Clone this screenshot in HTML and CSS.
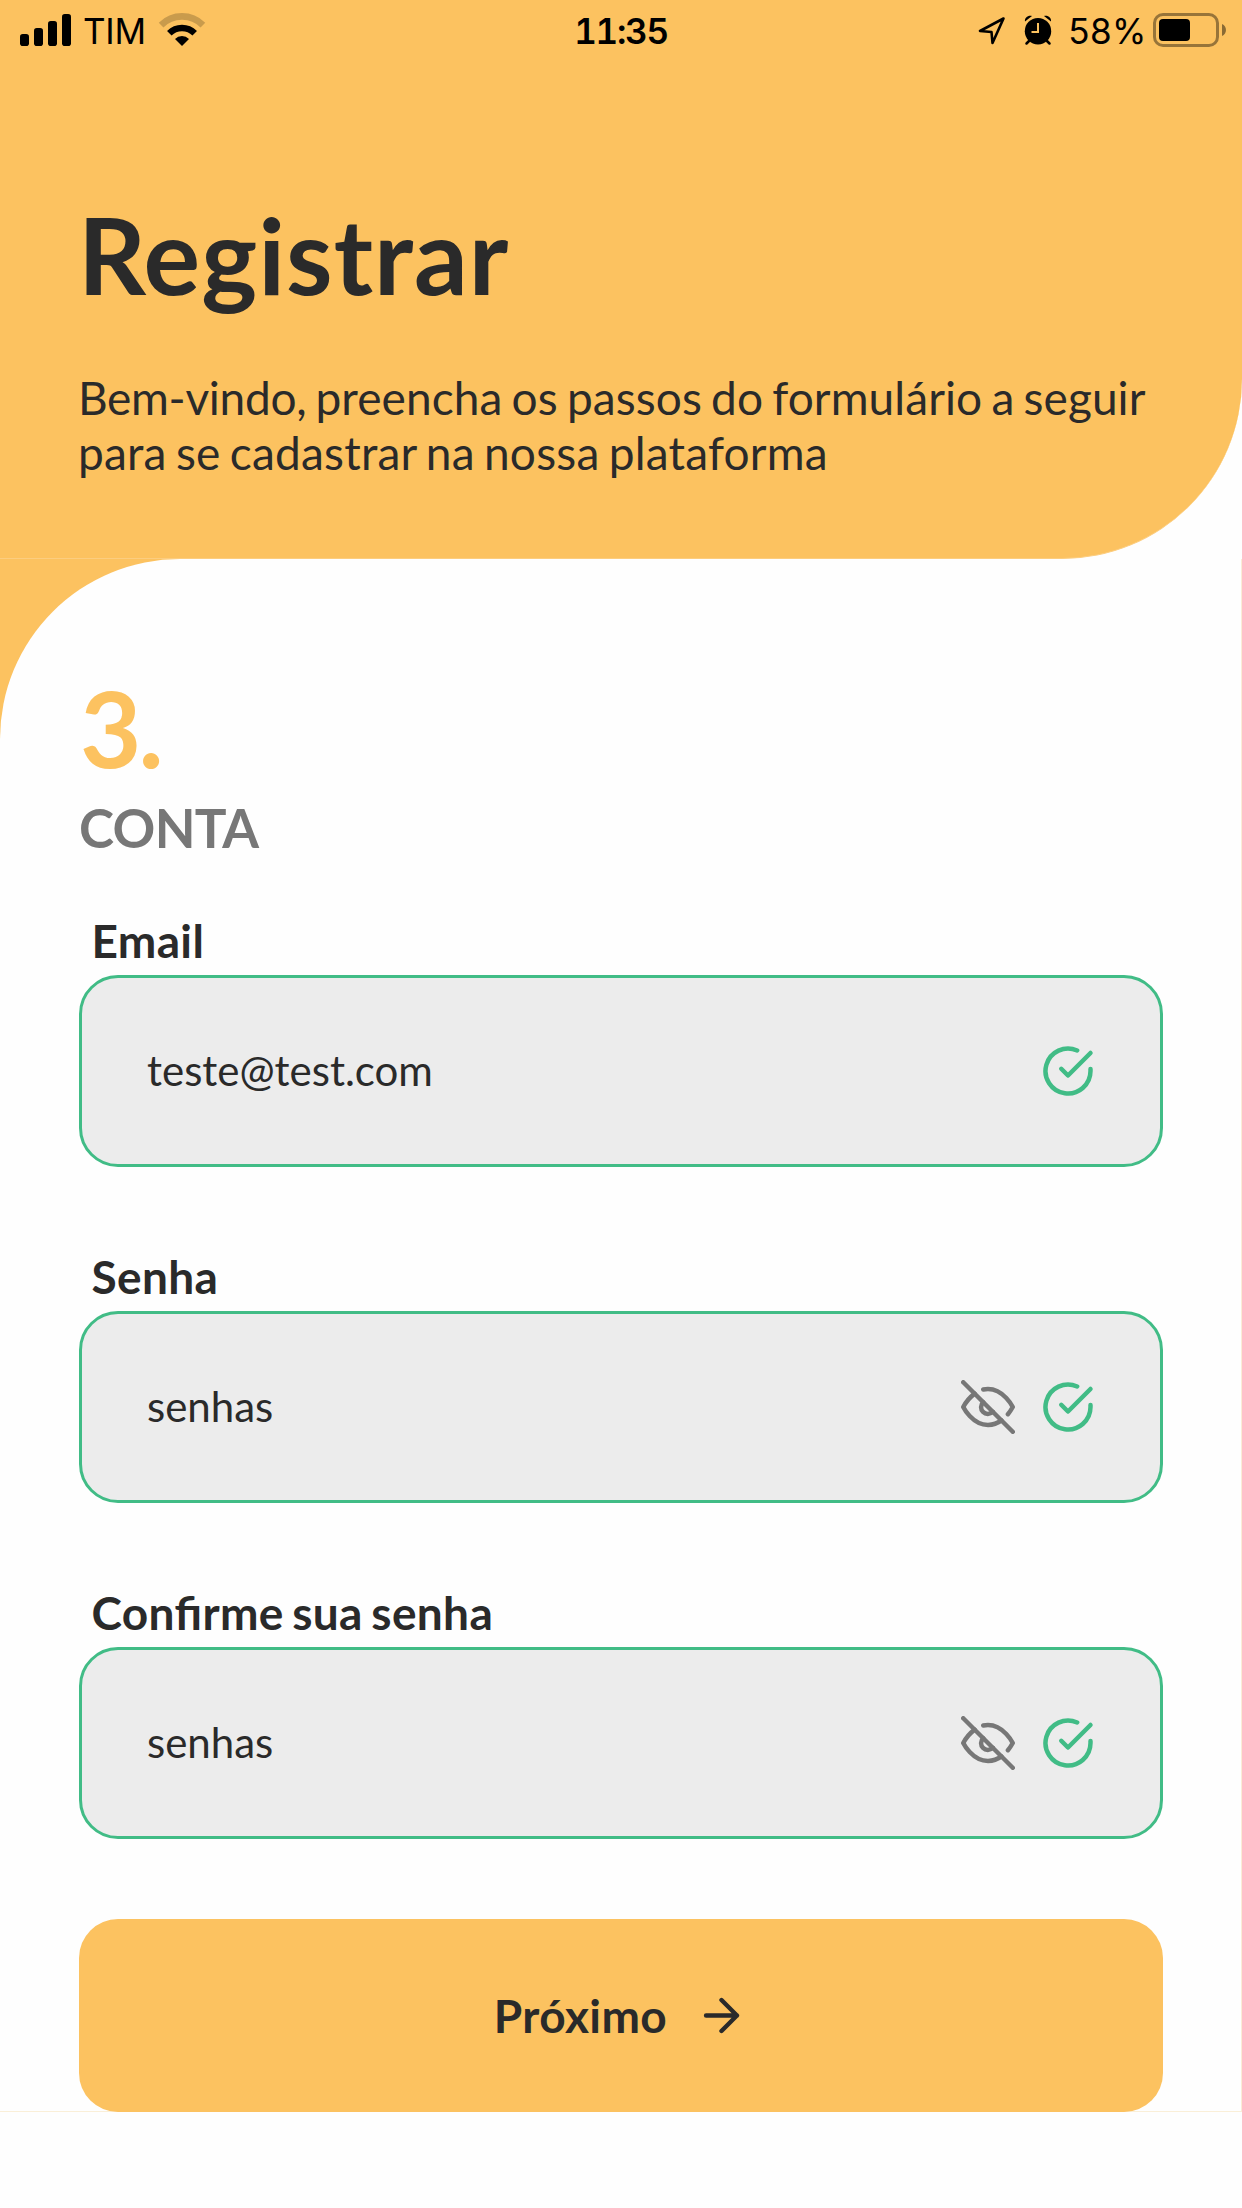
FILE: index.html
```html
<!DOCTYPE html>
<html lang="pt-BR">
<head>
<meta charset="utf-8">
<title>Registrar</title>
<link rel="stylesheet" href="styles.css">
</head>
<body>
<svg class="sprite" aria-hidden="true">
  <symbol id="check-circle" viewBox="0 0 24 24"><path d="M22 11.08V12a10 10 0 1 1-5.93-9.14"/><path d="M22 4 12 14.01l-3-3"/></symbol>
  <symbol id="eye-off" viewBox="0 0 24 24"><path d="M17.94 17.94A10.07 10.07 0 0 1 12 20c-7 0-11-8-11-8a18.45 18.45 0 0 1 5.06-5.94M9.9 4.24A9.12 9.12 0 0 1 12 4c7 0 11 8 11 8a18.5 18.5 0 0 1-2.16 3.19m-6.72-1.07a3 3 0 1 1-4.24-4.24"/><path d="M1 1l22 22"/></symbol>
</svg>
<header class="header">
  <div class="status">
    <div class="status-left">
      <svg width="52" height="33" viewBox="0 0 52 33"><rect y="20" width="9" height="12" rx="2.8"/><rect x="14" y="14" width="9" height="18" rx="2.8"/><rect x="28" y="7" width="9" height="25" rx="2.8"/><rect x="42" width="9" height="32" rx="2.8"/></svg>
      <span class="carrier">TIM</span>
      <svg class="wifi" width="48" height="36" viewBox="0 0 48 36"><path d="M3.1 13.1a29.5 29.5 0 0 1 41.8 0" fill="none" stroke="#000" stroke-opacity=".2" stroke-width="6.6"/><path d="M11.3 21.3a18 18 0 0 1 25.4 0" fill="none" stroke="#000" stroke-width="6.4"/><path d="M24 34 17 27a9.9 9.9 0 0 1 14 0z"/></svg>
    </div>
    <span class="time">11:35</span>
    <div class="status-right">
      <svg width="28" height="30" viewBox="0 0 28 30"><path d="M25.500 3.500 2 16l11.500 1L14.500 28z" fill="none" stroke="#000" stroke-width="2.600" stroke-linejoin="round"/></svg>
      <svg class="alarm" width="28" height="30" viewBox="0 0 28 30"><circle cx="14" cy="16.200" r="13.200"/><path d="M1 6.600C.4 3 4 0 8 1.100zM27 6.600C27.600 3 24 0 20 1.100z"/><path d="M5 26 2.500 28.500M23 26 25.500 28.500" fill="none" stroke="#000" stroke-width="2.500" stroke-linecap="round"/><path d="M14 8v9H7.500" fill="none" stroke="#fcc260" stroke-width="2"/></svg>
      <span class="percent">58%</span>
      <svg class="battery" width="74" height="34" viewBox="0 0 74 34"><rect x="1.500" y="1.500" width="63" height="31" rx="8.500" fill="none" stroke="#000" stroke-opacity=".4" stroke-width="3"/><rect x="6" y="6" width="31" height="22" rx="4"/><path d="M69 11c5.300 2 5.300 10 0 12z" fill-opacity=".45"/></svg>
    </div>
  </div>
  <h1 class="title">Registrar</h1>
  <p class="intro"><span class="greeting">Bem-vindo,</span> preencha os passos do formulário a seguir <span class="purpose">para se cadastrar na nossa plataforma</span></p>
</header>
<main class="backdrop">
  <form class="form">
    <div class="step">3.</div>
    <h2 class="step-name">CONTA</h2>
    <div class="fields">
      <div class="field">
        <label class="label">Email</label>
        <div class="input"><span class="value">teste@test.com</span><svg class="icon valid"><use href="#check-circle"/></svg></div>
      </div>
      <div class="field">
        <label class="label">Senha</label>
        <div class="input"><span class="value">senhas</span><svg class="icon"><use href="#eye-off"/></svg><svg class="icon valid"><use href="#check-circle"/></svg></div>
      </div>
      <div class="field">
        <label class="label">Confirme sua senha</label>
        <div class="input"><span class="value">senhas</span><svg class="icon"><use href="#eye-off"/></svg><svg class="icon valid"><use href="#check-circle"/></svg></div>
      </div>
    </div>
    <button class="next" type="button"><span>Próximo</span><svg class="arrow" viewBox="0 0 24 24"><path d="M5 12h14M12 5l7 7-7 7"/></svg></button>
  </form>
</main>
</body>
</html>
```
FILE: styles.css
```css
* { box-sizing: border-box; }
body {
  margin: 0;
  width: 1242px;
  min-height: 2208px;
  background: #fefefe;
  color: #2a2a2a;
  font-family: Lato, "Liberation Sans", sans-serif;
}
h1, h2, p { margin: 0; }
svg { display: block; flex: none; overflow: visible; }
.sprite { position: absolute; width: 0; height: 0; }

.header {
  height: 559px;
  background: #fcc260;
  border-bottom: 1px solid #fccd7f;
  border-bottom-right-radius: 180px;
}
.status {
  display: grid;
  grid-template-columns: 1fr auto 1fr;
  align-items: center;
  height: 60px;
  padding: 0 15px;
  color: #000;
  font: 400 35px/60px Inter, "Liberation Sans", sans-serif;
}
.status-left, .status-right { display: flex; align-items: center; }
.status-left { padding-left: 5px; }
.status-right { justify-content: flex-end; }
.carrier, .time, .percent { padding-top: 2px; line-height: 58px; }
.carrier { margin-left: 11px; letter-spacing: -.3px; }
.wifi { margin-left: 12px; }
.time { font-weight: 600; font-variant-numeric: tabular-nums; letter-spacing: -1.3px; }
.alarm { margin-left: 18px; }
.percent { margin: 0 6px 0 16px; letter-spacing: .5px; }

.title {
  margin: 131px 0 0 78px;
  font-size: 106px;
  line-height: 127px;
  font-weight: 700;
  letter-spacing: 1px;
}
.intro {
  margin: 52px 79px 0 78px;
  font-size: 46px;
  line-height: 55px;
  letter-spacing: .08px;
  word-spacing: -2.7px;
}
.greeting { letter-spacing: -.3px; }
.purpose { letter-spacing: .2px; }

.backdrop { background: linear-gradient(#fcc260 180px, #fbe8cd 180px); }
.form {
  height: 1553px;
  padding: 105px 79px 0;
  background: #fefefe;
  border-right: 1px solid #fbecd6;
  border-bottom: 1px solid #faefd8;
  border-top-left-radius: 180px;
}
.step {
  padding-left: 1px;
  color: #fcc260;
  font-size: 106px;
  line-height: 127px;
  font-weight: 700;
  letter-spacing: -3px;
}
.step-name {
  margin-top: 5px;
  color: #777;
  font-size: 53px;
  line-height: 64px;
  font-weight: 700;
  letter-spacing: -.7px;
}
.fields { display: grid; gap: 82px; margin-top: 53px; }
.label {
  display: block;
  padding-left: 12.5px;
  font-size: 46px;
  line-height: 55px;
  font-weight: 700;
  letter-spacing: .35px;
  word-spacing: -3px;
  font-feature-settings: "liga" 1;
}
.input {
  display: flex;
  align-items: center;
  gap: 26px;
  width: 1084px;
  height: 192px;
  margin-top: 7px;
  padding: 0 65px;
  border: 3px solid #41bc86;
  border-radius: 39px;
  background: #ececec;
}
.value { flex: 1; padding-bottom: 2px; font-size: 42px; line-height: 50px; }
.icon, .arrow {
  width: 54px;
  height: 54px;
  fill: none;
  stroke: #777;
  stroke-width: 2;
  stroke-linecap: round;
  stroke-linejoin: round;
}
.valid { stroke: #41bc86; }
.next {
  display: flex;
  align-items: center;
  justify-content: center;
  gap: 28px;
  width: 1084px;
  height: 193px;
  margin-top: 80px;
  padding: 0;
  border: 0;
  border-radius: 39px;
  background: #fcc260;
  color: #2a2a2a;
  font: 700 46px/55px Lato, "Liberation Sans", sans-serif;
  letter-spacing: .4px;
}
.arrow { width: 53px; height: 53px; stroke: #2a2a2a; }
```
